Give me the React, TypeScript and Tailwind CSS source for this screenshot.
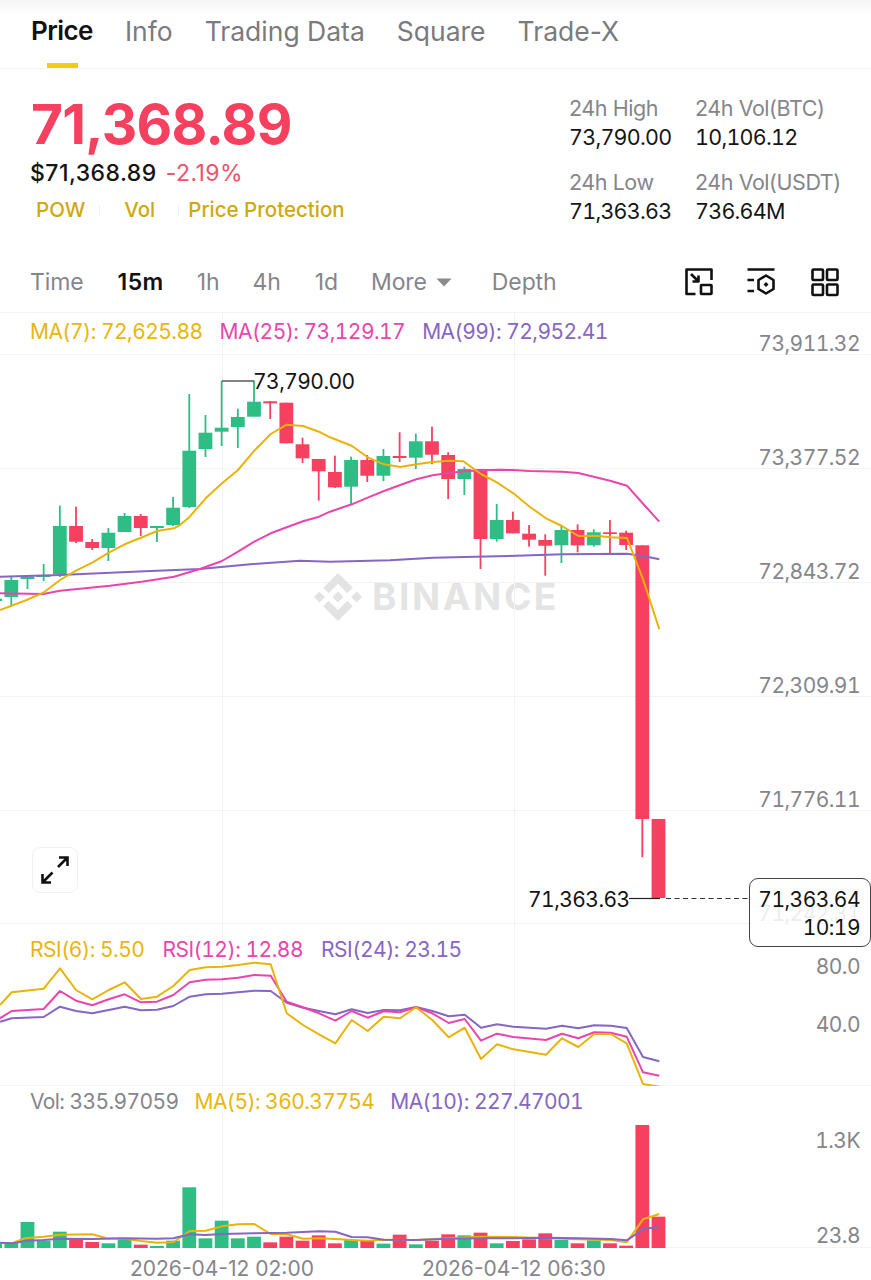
type Candle = [number, number, number, number, number]

const GREEN = '#2ebd85'
const RED = '#f6405f'
const YELLOW = '#eab308'
const PINK = '#e845ad'
const PURPLE = '#8566c4'

const candleX = (i: number) => 11.3 + 16.18 * i

// wickTop, wickBottom, bodyTop, bodyBottom, 1 = up
const candles: Candle[] = [
  [598, 602, 598.7, 601, 1],
  [577, 605, 580, 597, 1],
  [576, 589, 576.7, 579, 1],
  [564, 581, 575, 577, 1],
  [505.7, 577, 526, 574, 1],
  [506.7, 543, 526, 541.7, 0],
  [539, 550, 542, 548, 0],
  [528, 561, 532.7, 548, 1],
  [513, 532, 516, 532, 1],
  [514, 536, 516, 528, 0],
  [526, 542, 526, 528, 1],
  [497, 526, 507.7, 525, 1],
  [394, 508, 450.7, 507, 1],
  [415, 457, 432.7, 449, 1],
  [380.7, 446, 427.7, 431.7, 1],
  [408.7, 448, 417, 427, 1],
  [380.7, 402, 401.7, 416.7, 1],
  [401, 419, 401.3, 403.3, 0],
  [402.7, 443.3, 402.7, 443.3, 0],
  [437.7, 463, 444.3, 458.3, 0],
  [459, 500.7, 459, 471.3, 0],
  [455.7, 488, 472, 487.3, 0],
  [456.7, 504, 460, 486.7, 1],
  [455, 482, 460, 475.7, 0],
  [449, 481, 456, 475.7, 1],
  [432.3, 462, 456, 458, 0],
  [433.7, 469, 441.3, 457.7, 1],
  [426.7, 464.3, 441.3, 454.7, 0],
  [452.3, 499, 455, 479, 0],
  [466.7, 495, 469, 479, 1],
  [469, 569, 469, 539, 0],
  [504, 541.7, 520, 539, 1],
  [511.7, 533.3, 520, 533.3, 0],
  [525, 546.7, 533.7, 539.7, 0],
  [534.3, 575.7, 540, 545.7, 0],
  [526, 563, 530, 545.3, 1],
  [524.3, 552.3, 530, 545.3, 0],
  [529.3, 546.7, 532.3, 545.3, 1],
  [520, 554, 532.3, 534, 0],
  [530.7, 550, 532.7, 545, 0],
  [545.3, 857.3, 545.3, 819, 0],
  [819, 898, 819, 898, 0],
]

const ma7 = '0,610 26.7,600 43.3,592.7 60,580 76,570.7 92.3,562.7 108.7,552.7 124.7,544.3 141,537.7 157,531 174,528.3 180,525 189.7,516.7 205.7,498.3 222,483.3 238,470 254.3,450.7 270.7,434 286.7,424.7 303,426 319,431.7 330,437.3 351.7,445.7 367.7,457.3 384,464.3 400.3,467 416.3,464.3 432.7,462 448.7,460.7 463.3,461.3 481,474 497.3,482.7 513.3,493.3 529.7,506.7 546,518.3 562,526 578.3,536 594.7,535.7 611,537.3 627,538 643.3,580 659.3,629.3'
const ma25 = '0,593.3 43.3,594 60,590.7 110,585.7 141.7,581.7 174,576.7 200,569 222,561 238,551.7 254.3,541.7 270.7,533.3 286.7,527.3 303,521.3 319,516.7 330,511.7 351.7,504.3 367.7,497.7 384,491 400.3,485 416.3,479.3 432.7,475.3 448.7,473 465,471.3 481,470.3 500,469.7 513.3,470 529.7,471 562,471.7 578.3,473 594.7,477 611,481 627,485.7 643.3,504 659.3,521.7'
const ma99 = '0,576.7 60,575 133,571.7 200,569 253,564 300,560.7 330,561.7 390,560.3 433,557.7 497,556.3 563,554.3 627,553.7 643,556 659.3,559.3'

// traced from 3x crops, so x/3 and y/3 from the crop origin
const trace = (ox: number, oy: number, left: number[][], right: number[][]) =>
  [...left.map(([x, y]) => [x / 3, oy + y / 3]), ...right.map(([x, y]) => [ox + x / 3, oy + y / 3])]
    .map(([x, y]) => `${x.toFixed(1)},${y.toFixed(1)}`)
    .join(' ')

const rsi6 = trace(340, 930,
  [[0,225],[35,187],[131,176],[180,115],[228,180],[277,208],[326,180],[374,157],[423,207],[471,200],[520,168],[569,120],[617,112],[666,110],[714,105],[763,98],[812,103],[860,250],[909,285],[957,313],[1006,340]],
  [[35,270],[83,303],[131,260],[180,265],[228,232],[277,270],[326,322],[374,293],[423,387],[471,343],[520,358],[618,374],[666,325],[715,351],[763,312],[812,312],[860,340],[909,462],[958,470]])
const rsi12 = trace(340, 930,
  [[0,265],[35,243],[131,237],[180,183],[228,212],[277,226],[326,208],[374,193],[423,217],[471,215],[520,195],[569,157],[617,149],[666,148],[714,143],[763,135],[812,137],[860,215],[909,232],[957,250],[1006,272]],
  [[35,243],[83,263],[131,244],[180,247],[228,232],[277,250],[326,279],[374,267],[423,332],[471,311],[520,321],[618,330],[666,311],[715,325],[763,307],[812,308],[860,320],[909,427],[958,437]])
const rsi24 = trace(340, 930,
  [[0,275],[35,265],[131,261],[180,230],[228,243],[277,250],[326,240],[374,230],[423,241],[471,239],[520,228],[569,200],[617,193],[666,191],[714,187],[763,182],[812,183],[860,218],[909,233],[957,243],[1006,253]],
  [[35,238],[83,249],[131,240],[180,241],[228,231],[277,243],[326,259],[374,254],[423,293],[471,283],[520,290],[618,296],[666,287],[715,295],[763,286],[812,287],[860,294],[909,381],[958,394]])

const volMa5 = trace(340, 1110,
  [[0,400],[40,398],[75,385],[130,380],[180,374],[277,373],[320,385],[374,386],[423,393],[471,398],[520,397],[569,363],[617,362],[666,349],[714,343],[763,342],[812,372],[860,373],[909,386],[957,385],[1020,388]],
  [[35,390],[83,392],[131,389],[229,390],[326,385],[423,380],[520,381],[618,385],[715,388],[812,390],[860,397],[909,328],[958,312]])
const volMa10 = trace(340, 1110,
  [[0,398],[40,400],[80,392],[130,390],[180,386],[277,387],[374,385],[471,386],[520,385],[569,373],[617,375],[666,372],[763,370],[860,368],[957,364],[1006,365],[1020,370]],
  [[35,381],[83,382],[131,389],[229,390],[326,386],[423,385],[520,385],[618,383],[715,385],[812,387],[860,391],[909,358],[958,350]])

const volTops = [398,398,336,392,365,385,396,400,388,404,408,392,232,385,332,385,380,397,380,392,376,400,390,393,401,374,403,392,373,376,368,400,393,388,370,390,400,391,400,407,45,320]

function Grid({ lines, top, height }: { lines: number[]; top: number; height: number }) {
  return (
    <g stroke="#f3f3f3" strokeWidth="1">
      {lines.map((y) => <line key={y} x1="0" x2="871" y1={y + 0.5} y2={y + 0.5} />)}
      <line x1="222.5" x2="222.5" y1={top} y2={top + height} />
      <line x1="514.5" x2="514.5" y1={top} y2={top + height} />
    </g>
  )
}

function Line({ points, color }: { points: string; color: string }) {
  return <polyline points={points} fill="none" stroke={color} strokeWidth="2" strokeLinejoin="round" />
}

export default function App() {
  const navItem = 'text-[26.5px] leading-[32px] text-[#7a7a7e]'
  const interval = 'text-[23px] leading-[28px] text-[#85858a] tracking-[-0.1px]'
  const statLabel = 'text-[21.5px] leading-[28px] text-[#85858a] tracking-[-0.45px]'
  const statValue = 'text-[21.5px] leading-[30px] text-[#141414] tracking-[-0.75px] tabular-nums'
  const axis = 'text-[21px] leading-[24px] text-[#85858a] text-right tabular-nums tracking-[-0.55px]'

  return (
    <div className="w-[871px] h-[1280px] overflow-hidden bg-white font-['Inter',sans-serif]">
      <nav className="h-[69px] pt-[15px] pl-[31px] flex gap-[32px] border-b border-[#f3f3f3] bg-linear-to-b from-[#f5f5f5] to-white to-[22%]">
        <div className="relative h-[53px]">
          <span className="text-[26px] leading-[32px] font-semibold text-[#111] tracking-[-0.55px]">Price</span>
          <div className="absolute left-[16px] top-[48px] w-[31px] h-[5px] bg-[#f3c91c]" />
        </div>
        <span className={navItem}>Info</span>
        <span className={navItem}>Trading Data</span>
        <span className={navItem}>Square</span>
        <span className={navItem}>Trade-X</span>
      </nav>

      <section className="h-[189px] pl-[30px] flex">
        <div className="w-[539px]">
          <div className="mt-[22px] ml-px text-[55px] leading-[66px] font-bold text-[#f6405f] tracking-[-0.7px]">71,368.89</div>
          <div className="mt-[2px] flex items-center gap-[9px] text-[23px] leading-[28px] tracking-[0.45px]">
            <span className="font-medium text-[#141414]">$71,368.89</span>
            <span className="text-[#f0506e]">-2.19%</span>
          </div>
          <div className="mt-[10px] flex items-center text-[20.5px] leading-[26px] font-medium text-[#cfa80f]">
            <span className="ml-[6px]">POW</span>
            <span className="ml-[14px] w-px h-[10px] bg-[#f0f0f0]" />
            <span className="ml-[24px]">Vol</span>
            <span className="ml-[23px] w-px h-[10px] bg-[#f0f0f0]" />
            <span className="ml-[9px]">Price Protection</span>
          </div>
        </div>
        <div className="mt-[25px] grid grid-cols-[126px_1fr] gap-y-[16px] content-start">
          <div><div className={statLabel}>24h High</div><div className={statValue}>73,790.00</div></div>
          <div><div className={statLabel}>24h Vol(BTC)</div><div className={statValue}>10,106.12</div></div>
          <div><div className={statLabel}>24h Low</div><div className={statValue}>71,363.63</div></div>
          <div><div className={statLabel}>24h Vol(USDT)</div><div className={statValue}>736.64M</div></div>
        </div>
      </section>

      <div className="h-[54px] pb-[6px] pl-[30px] flex items-center">
        <span className={interval}>Time</span>
        <span className="ml-[34px] text-[23px] leading-[28px] font-semibold text-[#111] tracking-[0.4px]">15m</span>
        <span className={`ml-[33px] ${interval}`}>1h</span>
        <span className={`ml-[33px] ${interval}`}>4h</span>
        <span className={`ml-[34px] ${interval}`}>1d</span>
        <span className={`ml-[33px] ${interval}`}>More</span>
        <svg className="ml-[9px]" width="16" height="9" viewBox="0 0 16 9"><path d="M0.5 0.5h15L8 8.5z" fill="#8a8a8e" /></svg>
        <span className={`ml-[40px] ${interval}`}>Depth</span>

        <svg className="ml-[127px]" width="30" height="30" viewBox="0 0 30 30" fill="none" stroke="#111" strokeWidth="2.6" strokeLinejoin="round">
          <path d="M11.5 27H2.5V2.5H27.5V13" />
          <rect x="17" y="18" width="10.5" height="9" rx="0.5" />
          <path d="M7 7L14.5 14.5M14.5 8.5V14.5H8.5" />
        </svg>
        <svg className="ml-[32px]" width="30" height="30" viewBox="0 0 30 30" fill="none" stroke="#111" strokeWidth="2.6" strokeLinejoin="round">
          <path d="M1.5 2.5H28.5M1.5 13H8M1.5 24H8" />
          <path d="M20 8.5L27.5 13V22L20 26.5L12.5 22V13Z" />
          <path d="M20 15L22.5 17.5L20 20L17.5 17.5Z" fill="#111" stroke="none" />
        </svg>
        <svg className="ml-[34px]" width="30" height="30" viewBox="0 0 30 30" fill="none" stroke="#111" strokeWidth="2.6">
          <rect x="2.5" y="2.5" width="10.5" height="10.5" rx="1" />
          <rect x="17" y="2.5" width="10.5" height="10.5" rx="1" />
          <rect x="2.5" y="17.5" width="10.5" height="10.5" rx="1" />
          <rect x="17" y="17.5" width="10.5" height="10.5" rx="1" />
        </svg>
      </div>

      {/* main candles */}
      <div className="relative h-[612px]">
        <div className="absolute left-[372px] top-[264px] text-[37px] leading-[42px] font-bold text-[#e4e4e4] tracking-[2.6px]">BINANCE</div>
        <svg className="absolute inset-0" width="871" height="612" viewBox="0 312 871 612">
          <Grid lines={[312, 354, 468, 582, 696, 810, 923]} top={312} height={612} />
          <svg x="314" y="573" width="48" height="48" viewBox="0 0 32 32">
            <path fill="#e3e3e3" d="M9.789 13.446 16 7.235l6.214 6.214 3.613-3.613L16 0 6.176 9.824zM0 16l3.613-3.613L7.226 16l-3.613 3.613zm9.789 2.554L16 24.765l6.214-6.214 3.613 3.606L16 32l-9.824-9.824zM24.774 16l3.613-3.613L32 16l-3.613 3.613zM19.664 16 16 12.335 12.337 16 16 19.661z" />
          </svg>
          {candles.map(([wt, wb, bt, bb, up], i) => {
            const x = candleX(i - 1)
            const color = up ? GREEN : RED
            return (
              <g key={i} fill={color}>
                <rect x={x - 0.9} y={wt} width="1.8" height={wb - wt} />
                <rect x={x - 6.9} y={bt} width="13.8" height={bb - bt} />
              </g>
            )
          })}
          <Line points={ma99} color={PURPLE} />
          <Line points={ma25} color={PINK} />
          <Line points={ma7} color={YELLOW} />
          <path d="M222 381H254" stroke="#333" strokeWidth="1.2" />
          <path d="M629 898.5H660" stroke="#222" strokeWidth="1.2" />
          <path d="M666 898.5H750" stroke="#333" strokeWidth="1" strokeDasharray="5 3.5" />
        </svg>

        <div className="relative pl-[30px] pt-[7px] flex gap-[17px] text-[21px] leading-[26px] tabular-nums tracking-[-0.55px]">
          <span className="text-[#e9b60c]">MA(7): 72,625.88</span>
          <span className="text-[#e845ad]">MA(25): 73,129.17</span>
          <span className="text-[#8566c4]">MA(99): 72,952.41</span>
        </div>

        <div className="absolute right-[11px] top-[20px] flex flex-col gap-[90px]">
          <span className={axis}>73,911.32</span>
          <span className={axis}>73,377.52</span>
          <span className={axis}>72,843.72</span>
          <span className={axis}>72,309.91</span>
          <span className={axis}>71,776.11</span>
          <span className={axis}>71,242.31</span>
        </div>

        <span className="absolute left-[253px] top-[58px] text-[21px] leading-[24px] text-[#141414] tabular-nums tracking-[-0.55px]">73,790.00</span>
        <span className="absolute left-[528px] top-[576px] text-[21px] leading-[24px] text-[#141414] tabular-nums tracking-[-0.55px]">71,363.63</span>

        <button className="absolute left-[32px] top-[535px] w-[46px] h-[46px] rounded-[8px] border border-[#f0f0f0] bg-white flex items-center justify-center">
          <svg width="32" height="32" viewBox="0 0 32 32" fill="none" stroke="#111" strokeWidth="2.6">
            <path d="M20 3.5H28.5V12M28.5 3.5L19 13M13.5 18.5L3.5 28.5M3.5 20V28.5H12" />
          </svg>
        </button>

        <div className="absolute z-10 left-[749px] top-[566px] w-[122px] h-[69px] rounded-[9px] border border-[#444] bg-white/85 pr-[10px] pt-[7px] flex flex-col items-end text-[21px] leading-[28px] text-[#141414] tabular-nums tracking-[-0.55px]">
          <span>71,363.64</span>
          <span>10:19</span>
        </div>
      </div>

      {/* rsi */}
      <div className="relative h-[162px]">
        <svg className="absolute inset-0" width="871" height="162" viewBox="0 924 871 162">
          <Grid lines={[1085]} top={924} height={162} />
          <Line points={rsi24} color={PURPLE} />
          <Line points={rsi12} color={PINK} />
          <Line points={rsi6} color={YELLOW} />
        </svg>
        <div className="relative pl-[30px] pt-[13px] flex gap-[18px] text-[21px] leading-[26px] tabular-nums tracking-[-0.5px]">
          <span className="text-[#e9b60c]">RSI(6): 5.50</span>
          <span className="text-[#e845ad]">RSI(12): 12.88</span>
          <span className="text-[#8566c4]">RSI(24): 23.15</span>
        </div>
        <div className="absolute right-[11px] top-[31px] flex flex-col gap-[34px]">
          <span className={axis}>80.0</span>
          <span className={axis}>40.0</span>
        </div>
      </div>

      {/* volume */}
      <div className="relative h-[162px]">
        <svg className="absolute inset-0" width="871" height="162" viewBox="0 1086 871 162">
          <Grid lines={[1247]} top={1086} height={162} />
          {volTops.map((t, i) => {
            const top = 1110 + t / 3
            return (
              <rect key={i} x={candleX(i - 1) - 6.9} y={top} width="13.8" height={1248 - top} fill={candles[i][4] ? GREEN : RED} />
            )
          })}
          <Line points={volMa5} color={YELLOW} />
          <Line points={volMa10} color={PURPLE} />
        </svg>
        <div className="relative pl-[30px] pt-[3px] flex gap-[16px] text-[21px] leading-[26px] tabular-nums tracking-[-0.6px]">
          <span className="text-[#85858a]">Vol: 335.97059</span>
          <span className="text-[#e9b60c]">MA(5): 360.37754</span>
          <span className="text-[#8566c4]">MA(10): 227.47001</span>
        </div>
        <div className="absolute right-[11px] top-[43px] flex flex-col gap-[71px]">
          <span className={axis}>1.3K</span>
          <span className={axis}>23.8</span>
        </div>
      </div>

      <div className="relative h-[32px]">
        <span className="absolute left-[130px] top-[9px] text-[21px] leading-[24px] text-[#85858a]">2026-04-12 02:00</span>
        <span className="absolute left-[422px] top-[9px] text-[21px] leading-[24px] text-[#85858a]">2026-04-12 06:30</span>
      </div>
    </div>
  )
}
